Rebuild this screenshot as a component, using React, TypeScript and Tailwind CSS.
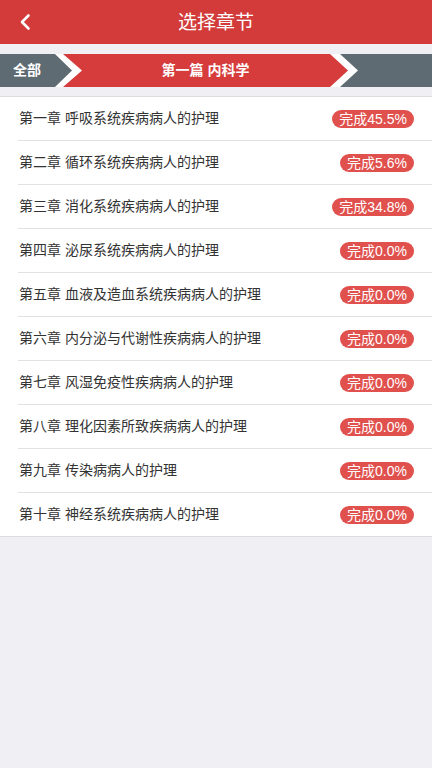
import React from 'react';

const chapters = [
  { name: '第一章 呼吸系统疾病病人的护理', rate: '45.5%' },
  { name: '第二章 循环系统疾病病人的护理', rate: '5.6%' },
  { name: '第三章 消化系统疾病病人的护理', rate: '34.8%' },
  { name: '第四章 泌尿系统疾病病人的护理', rate: '0.0%' },
  { name: '第五章 血液及造血系统疾病病人的护理', rate: '0.0%' },
  { name: '第六章 内分泌与代谢性疾病病人的护理', rate: '0.0%' },
  { name: '第七章 风湿免疫性疾病病人的护理', rate: '0.0%' },
  { name: '第八章 理化因素所致疾病病人的护理', rate: '0.0%' },
  { name: '第九章 传染病病人的护理', rate: '0.0%' },
  { name: '第十章 神经系统疾病病人的护理', rate: '0.0%' },
];

const font = { fontFamily: '"Liberation Sans", "Noto Sans CJK SC", sans-serif' };

const App: React.FC = () => {
  return (
    <div className="min-h-[768px] w-full bg-[#efeff4]" style={font}>
      {/* Header */}
      <div className="relative flex h-[44px] items-center justify-center bg-[#d33b3b]">
        <button className="absolute left-[14px] top-[11px] flex h-[22px] w-[22px] items-center justify-center">
          <svg width="14" height="18" viewBox="0 0 14 18" fill="none">
            <path d="M10.5 2.5 L4 9 L10.5 15.5" stroke="white" strokeWidth="2.6" strokeLinecap="round" strokeLinejoin="round" />
          </svg>
        </button>
        <h1 className="text-[19px] leading-none text-white">选择章节</h1>
      </div>

      {/* Breadcrumb */}
      <div className="mt-[10px] flex h-[33px] bg-white">
        <div
          className="flex h-full w-[72px] shrink-0 items-center bg-[#5f6b73] pl-[13px] text-[14px] font-bold text-white"
          style={{ clipPath: 'polygon(0 0, 55px 0, 72px 50%, 55px 100%, 0 100%)' }}
        >
          全部
        </div>
        <div
          className="-ml-[9px] flex h-full w-[285px] shrink-0 items-center justify-center bg-[#d63c3c] text-[14px] font-bold text-white"
          style={{ clipPath: 'polygon(0 0, 267px 0, 285px 50%, 267px 100%, 0 100%, 19px 50%)' }}
        >
          第一篇 内科学
        </div>
        <div
          className="-ml-[8px] h-full flex-1 bg-[#5f6b73]"
          style={{ clipPath: 'polygon(0 0, 100% 0, 100% 100%, 0 100%, 18px 50%)' }}
        />
      </div>

      {/* Chapter list */}
      <div className="mt-[9px] border-y border-[#dcdce0] bg-white">
        {chapters.map((c, i) => (
          <div key={c.name} className="pl-[18px]">
            <div
              className={
                'flex items-center justify-between pr-[18px] ' +
                (i < chapters.length - 1 ? 'h-[44px] border-b border-[#e2e2e6]' : 'h-[43px]')
              }
            >
              <span className="pl-[1px] text-[14px] text-[#333333]">{c.name}</span>
              <span className="flex h-[18px] items-center rounded-full bg-[#e0514e] px-[7px] text-[14px] leading-none text-white">
                完成{c.rate}
              </span>
            </div>
          </div>
        ))}
      </div>
    </div>
  );
};

export default App;
